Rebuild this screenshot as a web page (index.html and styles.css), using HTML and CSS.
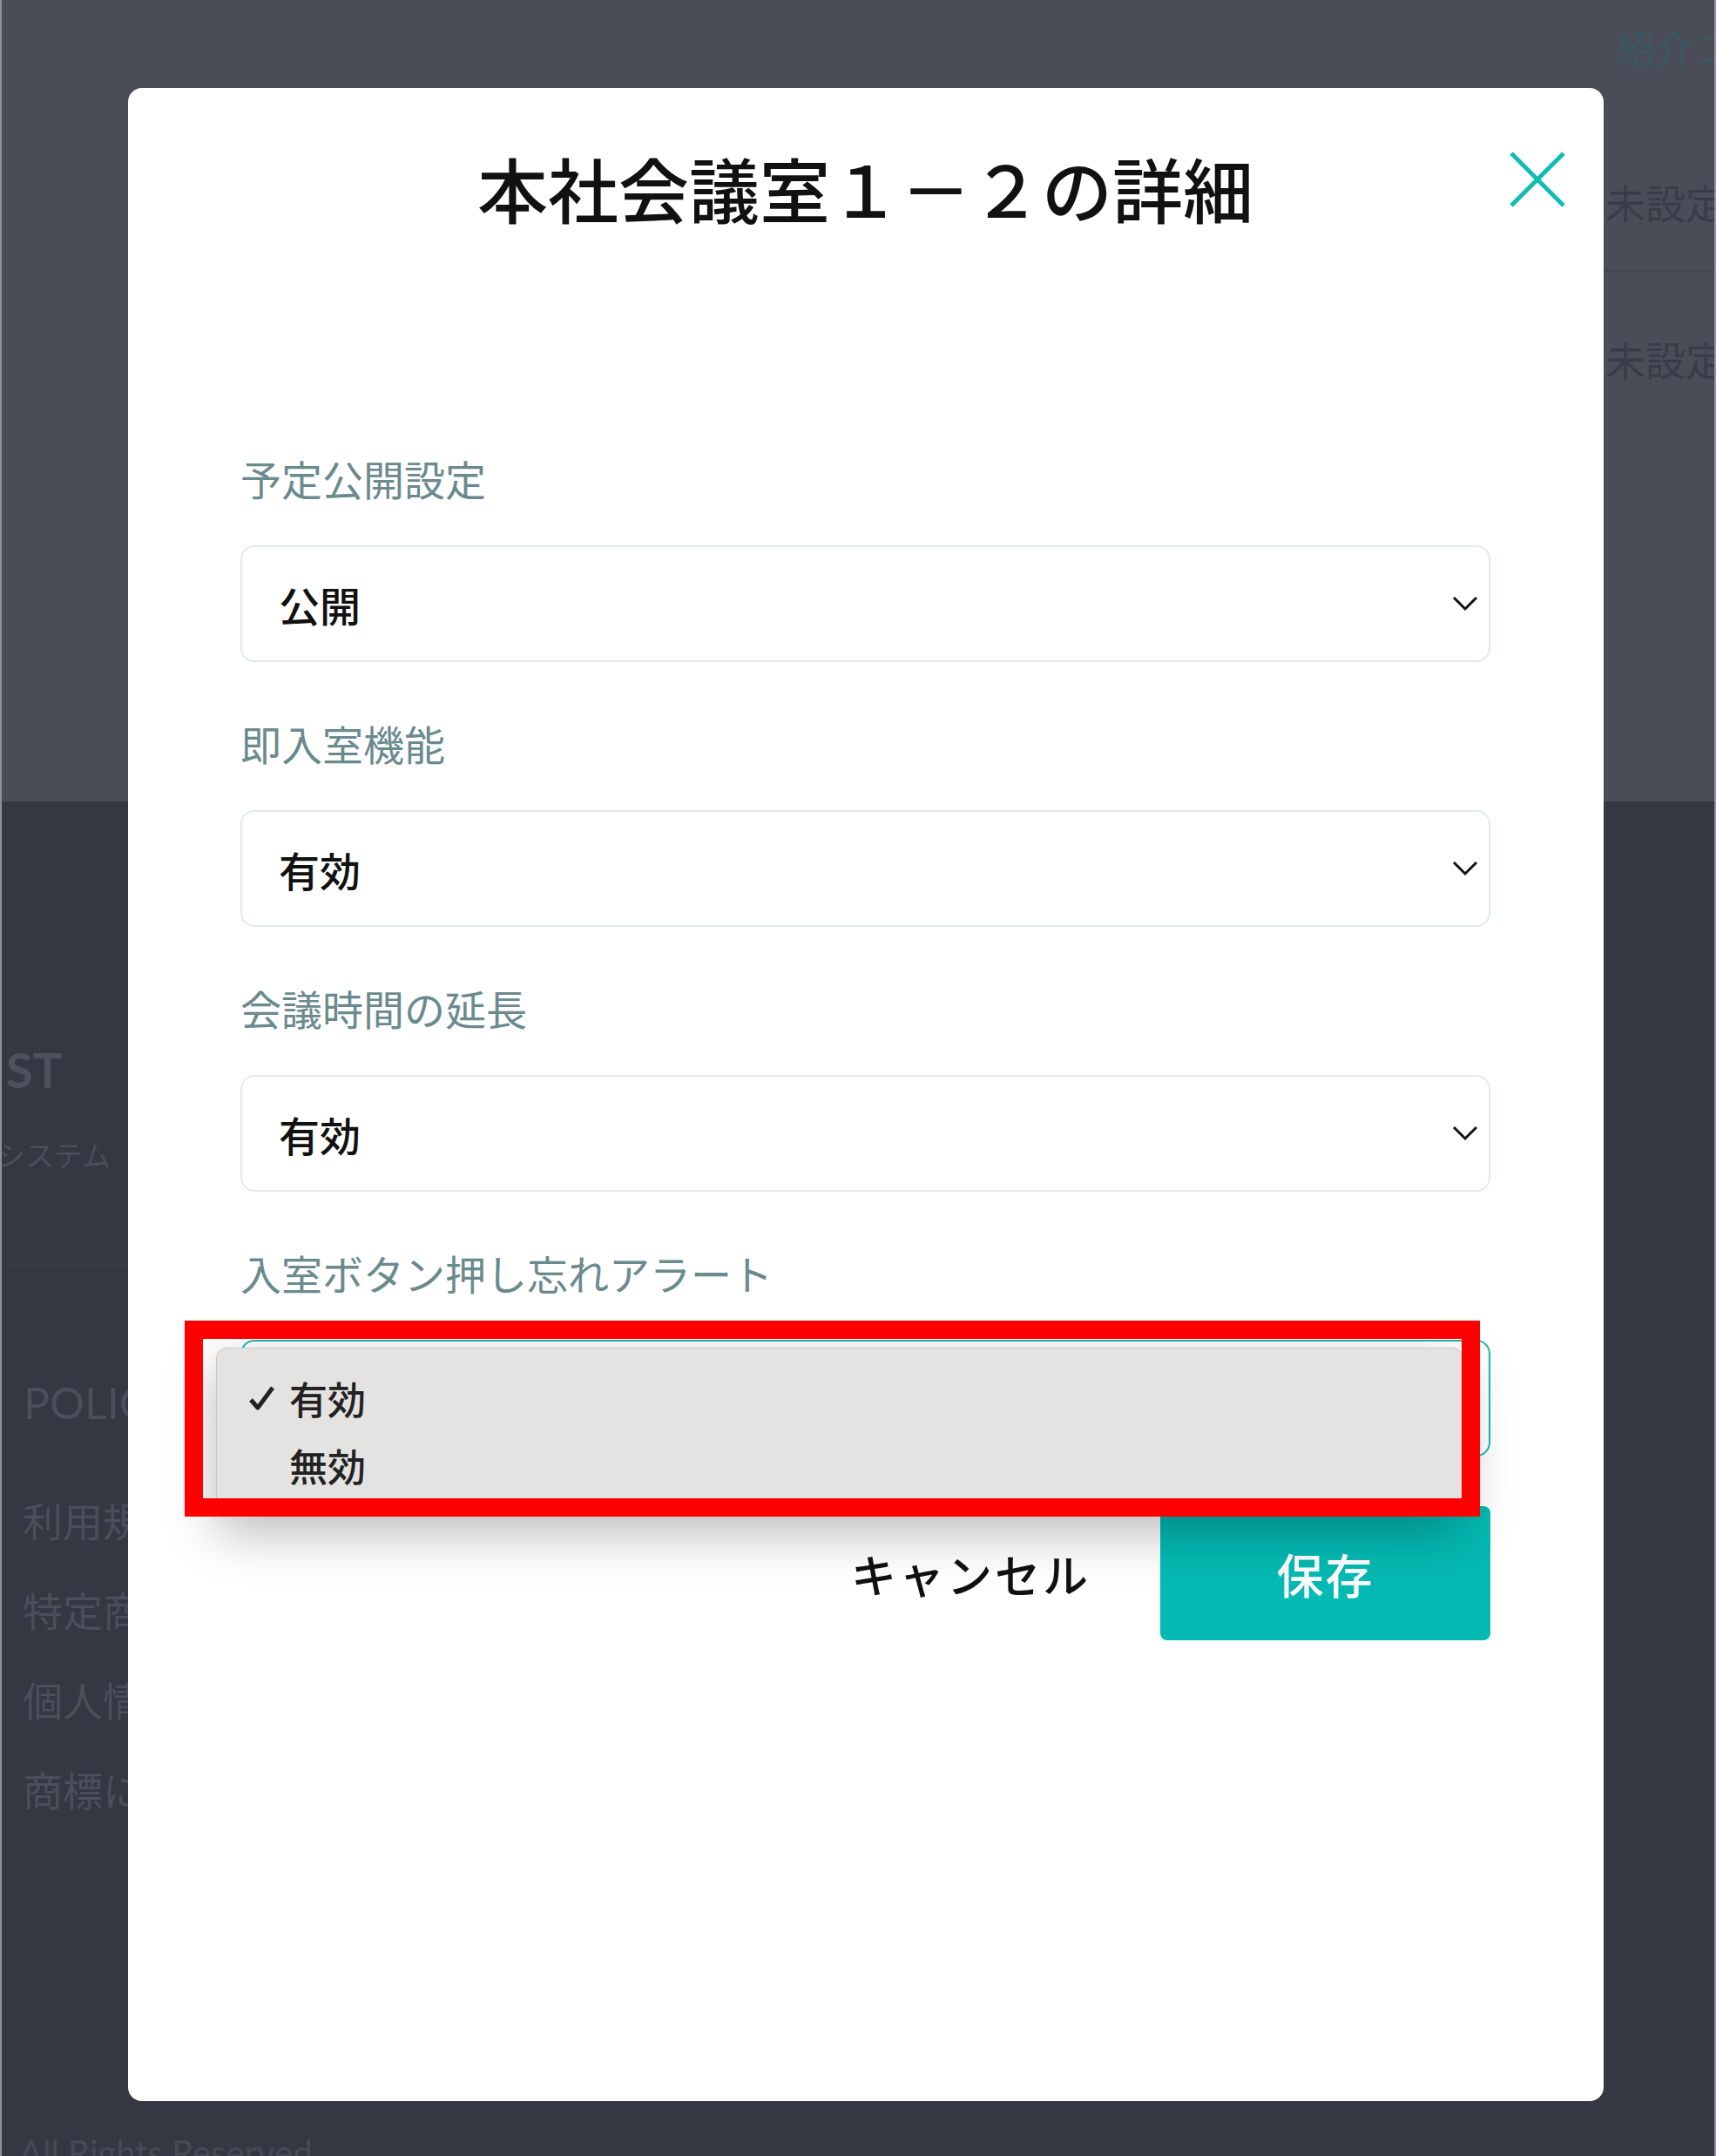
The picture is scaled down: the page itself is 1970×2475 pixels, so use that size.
FILE: index.html
```html
<!DOCTYPE html>
<html lang="ja">
<head>
    <meta charset="UTF-8">
    <meta name="viewport" content="width=device-width, initial-scale=1.0">
    <title>本社会議室１－２の詳細</title>
    <link rel="stylesheet" href="styles.css">
</head>
<body>
    <div id="page">
        <!-- 背景のページ（モーダルの下） -->
        <div class="page-top">
            <div class="room-col">
                <div class="room-cell room-head">紹介コード</div>
                <div class="room-cell">未設定</div>
                <div class="room-cell">未設定</div>
            </div>
        </div>
        <div class="page-footer">
            <div class="footer-logo">ST</div>
            <div class="footer-sub">システム</div>
            <div class="footer-rule"></div>
            <div class="footer-title">POLICY</div>
            <ul class="footer-links">
                <li>利用規約</li>
                <li>特定商取引法に基づく表記</li>
                <li>個人情報保護方針</li>
                <li>商標について</li>
            </ul>
            <div class="footer-copy">All Rights Reserved</div>
        </div>

        <!-- 詳細モーダル -->
        <div class="modal">
            <h1 class="modal-title">本社会議室１－２の詳細</h1>
            <button class="close-button" aria-label="閉じる">
                <svg width="64" height="64" viewBox="0 0 64 64">
                    <path d="M2 2 L62 62 M62 2 L2 62" stroke="#12bcb4" stroke-width="5" fill="none"/>
                </svg>
            </button>

            <div class="form">
                <div class="field">
                    <div class="field-label">予定公開設定</div>
                    <div class="select-box">
                        <span>公開</span>
                        <svg class="chevron" width="30" height="18" viewBox="0 0 30 18"><path d="M2 2 L15 15 L28 2" stroke="#111" stroke-width="3" fill="none"/></svg>
                    </div>
                </div>
                <div class="field">
                    <div class="field-label">即入室機能</div>
                    <div class="select-box">
                        <span>有効</span>
                        <svg class="chevron" width="30" height="18" viewBox="0 0 30 18"><path d="M2 2 L15 15 L28 2" stroke="#111" stroke-width="3" fill="none"/></svg>
                    </div>
                </div>
                <div class="field">
                    <div class="field-label">会議時間の延長</div>
                    <div class="select-box">
                        <span>有効</span>
                        <svg class="chevron" width="30" height="18" viewBox="0 0 30 18"><path d="M2 2 L15 15 L28 2" stroke="#111" stroke-width="3" fill="none"/></svg>
                    </div>
                </div>
                <div class="field">
                    <div class="field-label">入室ボタン押し忘れアラート</div>
                    <div class="select-box focused">
                        <span>有効</span>
                        <svg class="chevron" width="30" height="18" viewBox="0 0 30 18"><path d="M2 2 L15 15 L28 2" stroke="#111" stroke-width="3" fill="none"/></svg>
                    </div>
                </div>

                <div class="actions">
                    <button class="cancel-button">キャンセル</button>
                    <button class="save-button">保存</button>
                </div>
            </div>

            <!-- 開いているドロップダウン -->
            <div class="option-list">
                <div class="option selected">
                    <svg class="check" width="32" height="30" viewBox="0 0 32 30"><path d="M3 17 L11 26 L28 3" stroke="#222" stroke-width="5" fill="none" stroke-linejoin="round"/></svg>
                    <span>有効</span>
                </div>
                <div class="option">
                    <span class="check-space"></span>
                    <span>無効</span>
                </div>
            </div>
            <div class="highlight"></div>
        </div>
    </div>
</body>
</html>
```

FILE: styles.css
```css
*, *::before, *::after {
    box-sizing: border-box;
}

body {
    margin: 0;
    font-family: "Noto Sans CJK JP", "Noto Sans", sans-serif;
    background-color: #353743;
}

#page {
    position: relative;
    width: 1970px;
    height: 2475px;
    overflow: hidden;
    border-left: 2px solid #8f9098;
    border-right: 2px solid #8f9098;
}

/* 背景ページ */
.page-top {
    height: 920px;
    background-color: #4a4c58;
    display: flex;
    justify-content: flex-end;
}
.room-col {
    width: 128px;
    overflow: hidden;
    white-space: nowrap;
}
.room-cell {
    height: 179px;
    display: flex;
    align-items: center;
    padding-left: 3px;
    padding-top: 18px;
    font-size: 46px;
    color: #393c48;
    border-bottom: 2px solid #444652;
}
.room-cell:last-child {
    border-bottom: none;
}
.room-head {
    height: 133px;
    align-items: flex-start;
    padding-left: 15px;
    padding-top: 22px;
    font-size: 45px;
    color: #3a5862;
    border-bottom-color: #474955;
}

.page-footer {
    height: 1555px;
    background-color: #353743;
    color: #4b4e5b;
    padding-top: 280px;
    white-space: nowrap;
}
.footer-logo {
    font-family: "Lato", "Noto Sans", sans-serif;
    font-weight: 700;
    font-size: 56px;
    line-height: 56px;
    padding-left: 5px;
    color: #4e515d;
}
.footer-sub {
    font-size: 33px;
    line-height: 33px;
    margin-top: 53px;
    margin-left: -6px;
}
.footer-rule {
    height: 2px;
    width: 150px;
    background-color: #393b47;
    margin-top: 109px;
}
.footer-title {
    font-family: "Lato", "Noto Sans", sans-serif;
    font-size: 50px;
    line-height: 50px;
    padding-left: 25px;
    margin-top: 132px;
}
.footer-links {
    list-style: none;
    margin: 86px 0 0;
    padding: 0 0 0 24px;
}
.footer-links li {
    font-size: 46px;
    line-height: 46px;
    margin-bottom: 57px;
}
.footer-copy {
    font-family: "Lato", "Noto Sans", sans-serif;
    font-size: 40px;
    line-height: 40px;
    padding-left: 20px;
    margin-top: 375px;
    color: #464956;
}

/* モーダル */
.modal {
    position: absolute;
    left: 145px;
    top: 101px;
    width: 1694px;
    height: 2311px;
    background-color: #ffffff;
    border-radius: 16px;
    padding: 74px 130px 0 129px;
}
.modal-title {
    margin: 0;
    font-size: 81px;
    line-height: 80px;
    font-weight: 500;
    text-align: center;
    color: #111;
}
.close-button {
    position: absolute;
    top: 73px;
    right: 44px;
    width: 64px;
    height: 64px;
    padding: 0;
    border: none;
    background: none;
    cursor: pointer;
}
.close-button svg {
    display: block;
}

.form {
    margin-top: 271px;
}
.field + .field {
    margin-top: 70px;
}
.field-label {
    font-size: 47px;
    line-height: 45px;
    color: #6b8a8e;
    margin-bottom: 55px;
}
.select-box {
    height: 134px;
    border: 2px solid #e2e9ef;
    border-radius: 16px;
    padding: 0 12px 0 42px;
    display: flex;
    align-items: center;
    justify-content: space-between;
    font-size: 47px;
    font-weight: 500;
    color: #111;
}
.select-box.focused {
    border-color: #14b8b0;
}
.chevron {
    display: block;
}

.actions {
    margin-top: 57px;
    display: flex;
    justify-content: flex-end;
    align-items: center;
    gap: 80px;
}
.cancel-button {
    font-family: inherit;
    font-size: 52px;
    letter-spacing: 3px;
    font-weight: 500;
    color: #111;
    background: none;
    border: none;
    padding: 0;
    cursor: pointer;
}
.save-button {
    width: 379px;
    height: 154px;
    border: none;
    border-radius: 8px;
    background-color: #04bab3;
    color: #ffffff;
    font-family: inherit;
    font-size: 54px;
    letter-spacing: 2px;
    font-weight: 500;
    cursor: pointer;
}

/* ドロップダウン */
.option-list {
    position: absolute;
    left: 101px;
    top: 1446px;
    width: 1432px;
    height: 190px;
    background-color: #e4e3e1;
    border: 1px solid #c9c8c6;
    border-radius: 12px;
    padding-top: 18px;
    box-shadow: 0 22px 60px rgba(0, 0, 0, 0.28);
}
.option {
    display: flex;
    align-items: center;
    height: 77px;
    padding-left: 36px;
    font-size: 44px;
    font-weight: 500;
    color: #222;
}
.check,
.check-space {
    display: block;
    width: 32px;
    margin-right: 15px;
    flex-shrink: 0;
}

/* 注目枠 */
.highlight {
    position: absolute;
    left: 65px;
    top: 1415px;
    width: 1487px;
    height: 225px;
    border: 21px solid #ff0000;
}
```
